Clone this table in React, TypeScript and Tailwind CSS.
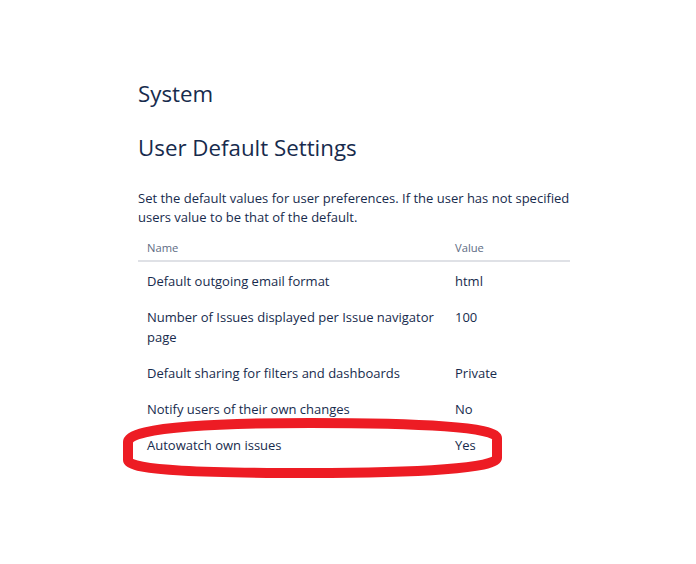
import React from "react";

const rows: [string, string][] = [
  ["Default outgoing email format", "html"],
  ["Number of Issues displayed per Issue navigator page", "100"],
  ["Default sharing for filters and dashboards", "Private"],
  ["Notify users of their own changes", "No"],
  ["Autowatch own issues", "Yes"],
];

export default function App() {
  return (
    <div
      className="relative w-[696px] h-[564px] bg-white text-[#172b4d] overflow-hidden"
      style={{ fontFamily: '"Open Sans", "Noto Sans", sans-serif' }}
    >
      <div className="ml-[138px] w-[434px] pt-[80px]">
        <h1 className="text-[22.3px] leading-[28px] font-normal">System</h1>
        <h2 className="mt-[26px] text-[22.3px] leading-[28px] font-normal">User Default Settings</h2>
        <p className="mt-[27px] text-[13px] leading-[19px]">
          Set the default values for user preferences. If the user has not specified users value to be that of the default.
        </p>
        <div className="mt-[13px] w-[432px]">
          <div className="flex border-b-2 border-[#dfe1e6] pb-[4px] text-[11.2px] leading-[16px] text-[#5e6c84]">
            <div className="w-[309px] px-[9px]">Name</div>
            <div className="flex-1 px-[8px]">Value</div>
          </div>
          <div className="pt-[1px]">
            {rows.map(([n, v]) => (
              <div key={n} className="flex py-[8px] text-[13px] leading-[20px]">
                <div className="w-[309px] px-[9px]">{n}</div>
                <div className="flex-1 px-[8px]">{v}</div>
              </div>
            ))}
          </div>
        </div>
      </div>
      <svg
        className="absolute left-0 top-0 pointer-events-none"
        width="696"
        height="564"
        viewBox="0 0 696 564"
      >
        <path
          d="M 128 442 C 128 426, 230 423, 310 423 C 420 423, 497 427, 497 438 L 497 458 C 497 468, 420 473, 310 473 C 210 473, 128 471, 128 460 Z"
          fill="none"
          stroke="#ed1c24"
          strokeWidth="10"
        />
      </svg>
    </div>
  );
}
